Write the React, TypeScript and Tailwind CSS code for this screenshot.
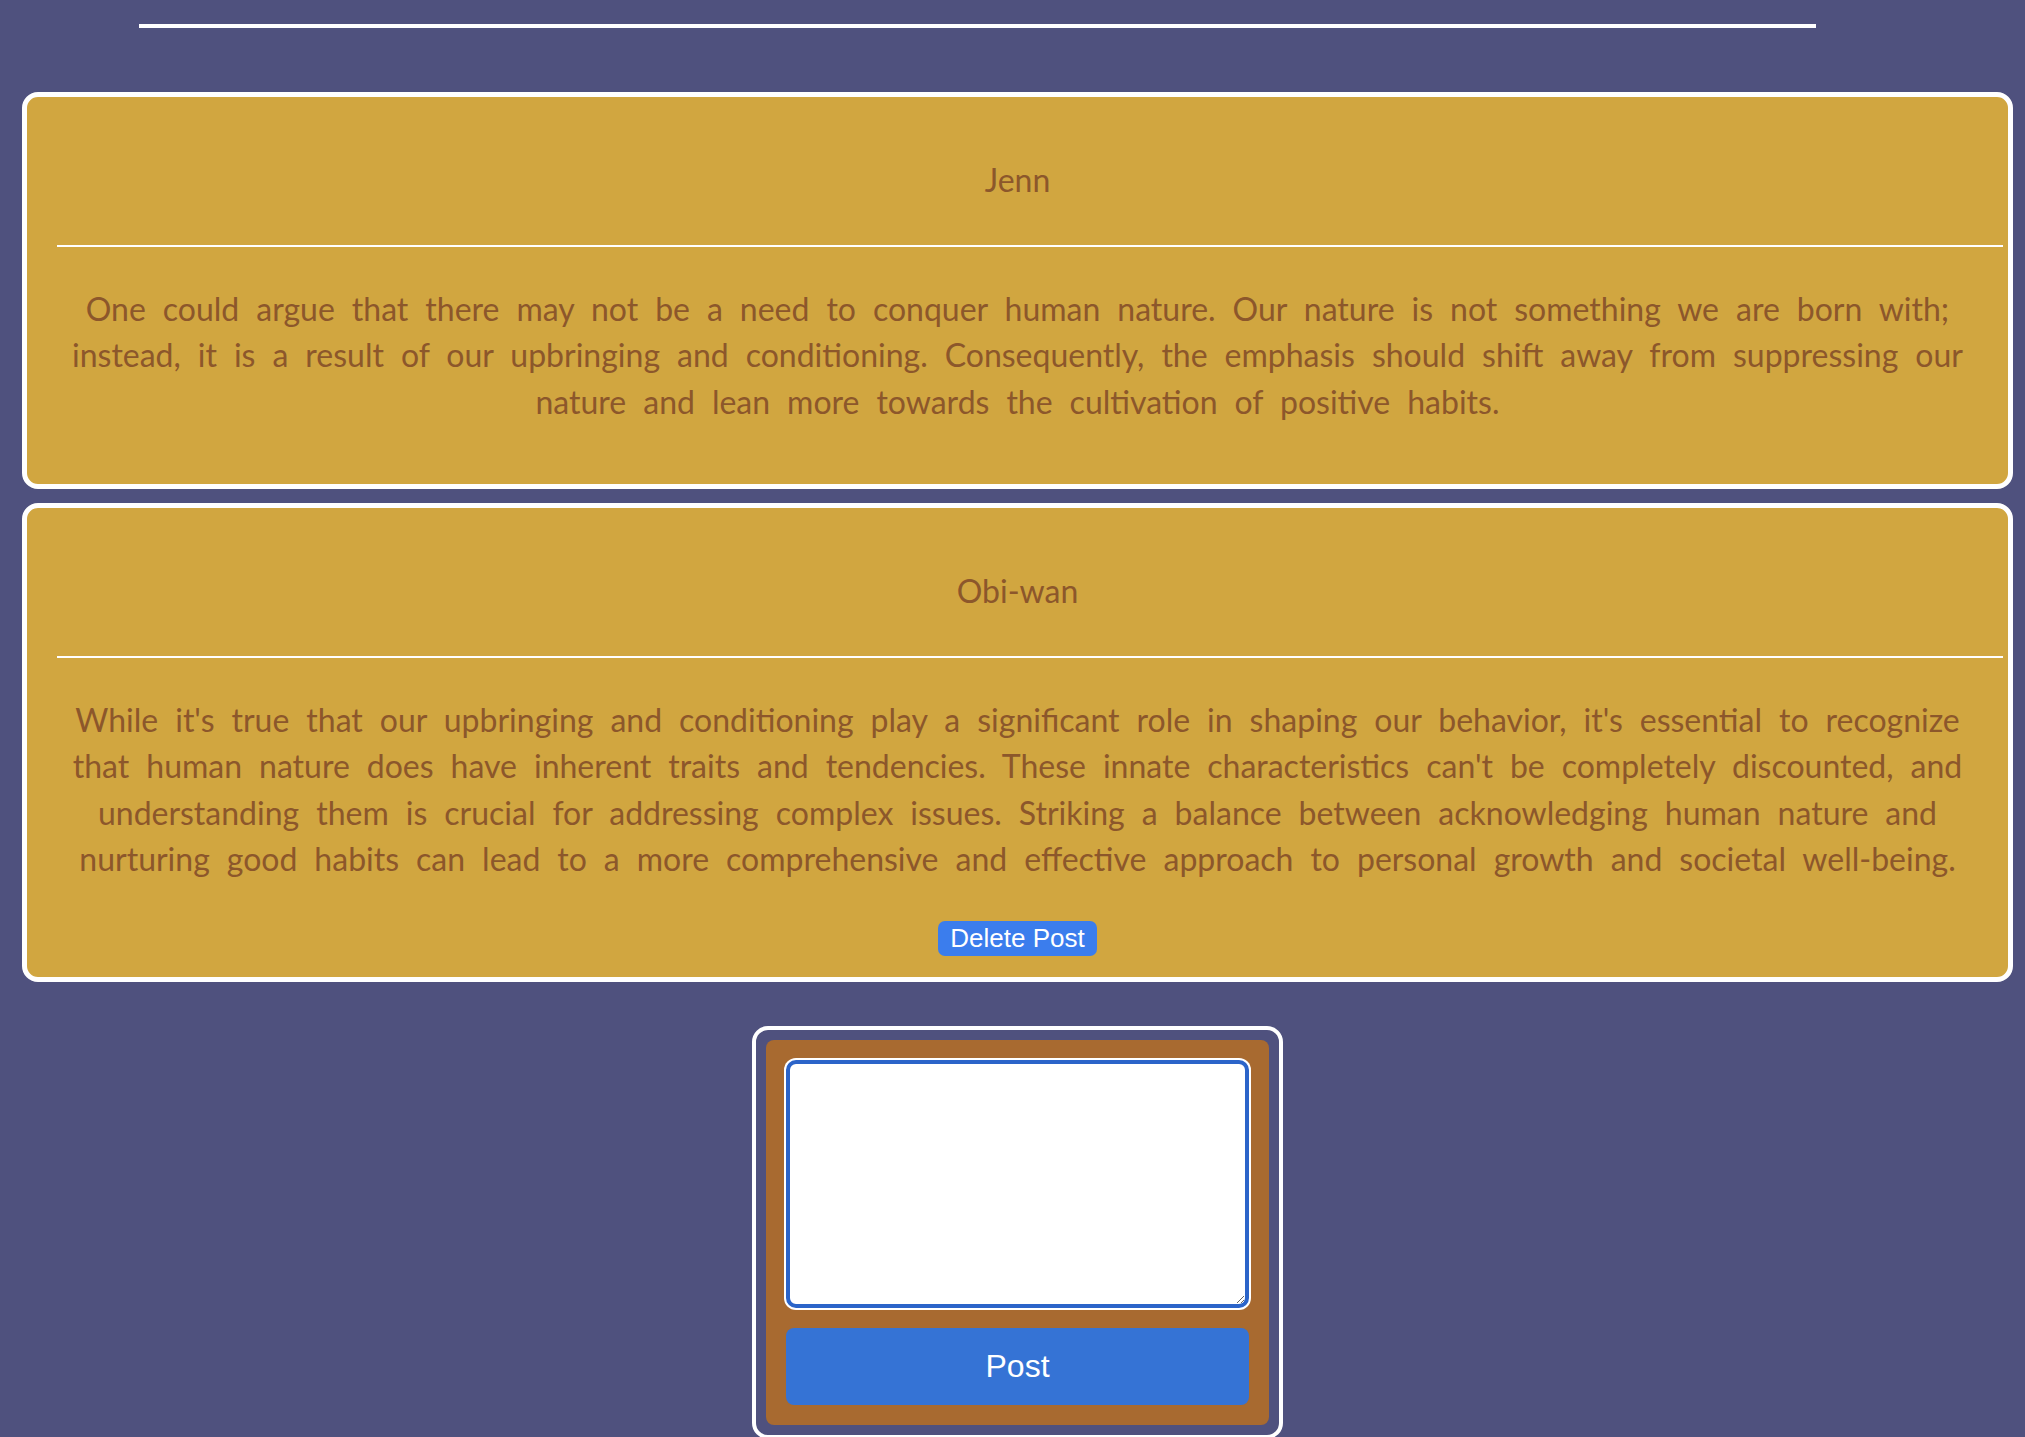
const posts = [
  {
    author: "Jenn",
    lines: [
      "One could argue that there may not be a need to conquer human nature. Our nature is not something we are born with;",
      "instead, it is a result of our upbringing and conditioning. Consequently, the emphasis should shift away from suppressing our",
      "nature and lean more towards the cultivation of positive habits.",
    ],
    canDelete: false,
  },
  {
    author: "Obi-wan",
    lines: [
      "While it's true that our upbringing and conditioning play a significant role in shaping our behavior, it's essential to recognize",
      "that human nature does have inherent traits and tendencies. These innate characteristics can't be completely discounted, and",
      "understanding them is crucial for addressing complex issues. Striking a balance between acknowledging human nature and",
      "nurturing good habits can lead to a more comprehensive and effective approach to personal growth and societal well-being.",
    ],
    canDelete: true,
  },
]

function PostCard({ post }: { post: (typeof posts)[number] }) {
  return (
    <div className="border-[5px] border-white rounded-[16px] bg-[#d1a640] text-center text-[#8c572b] text-[32px] leading-[46.5px] pt-[60px] pb-[21px]">
      <div>{post.author}</div>
      <div className="mt-[41px] ml-[30px] mr-[5px] h-[2px] bg-white" />
      <p className="mt-[39px] mb-[38px] [word-spacing:8.8px]">
        {post.lines.map((line, i) => (
          <span key={i} className="block whitespace-nowrap">
            {line}
          </span>
        ))}
      </p>
      {post.canDelete && (
        <div className="mt-[6px] flex justify-center">
          <button className="h-[35px] px-[12px] rounded-[7px] bg-[#3b7ded] text-white text-[26px] leading-none font-['Liberation_Sans',Arial,sans-serif]">
            Delete Post
          </button>
        </div>
      )}
    </div>
  )
}

export default function App() {
  return (
    <div className="min-h-screen bg-[#4f517e] pt-[24px] font-['Lato',sans-serif]">
      <div className="ml-[139px] w-[1677px] h-[4px] bg-white" />
      <div className="mt-[64px] ml-[22px] mr-[12px]">
        <div className="flex flex-col gap-[14px]">
          {posts.map((post) => (
            <PostCard key={post.author} post={post} />
          ))}
        </div>
        <div className="mt-[44px] mx-auto w-[531px] border-4 border-white rounded-[16px] p-[10px]">
          <div className="bg-[#a86a30] rounded-[8px] p-[20px] flex flex-col gap-[20px]">
            <textarea className="block w-full h-[248px] bg-white border-4 border-[#2b64c9] rounded-[10px] ring-2 ring-white outline-none" />
            <button className="h-[77px] w-full rounded-[8px] bg-[#3573d5] text-white text-[32px] font-['Liberation_Sans',Arial,sans-serif]">
              Post
            </button>
          </div>
        </div>
      </div>
    </div>
  )
}
